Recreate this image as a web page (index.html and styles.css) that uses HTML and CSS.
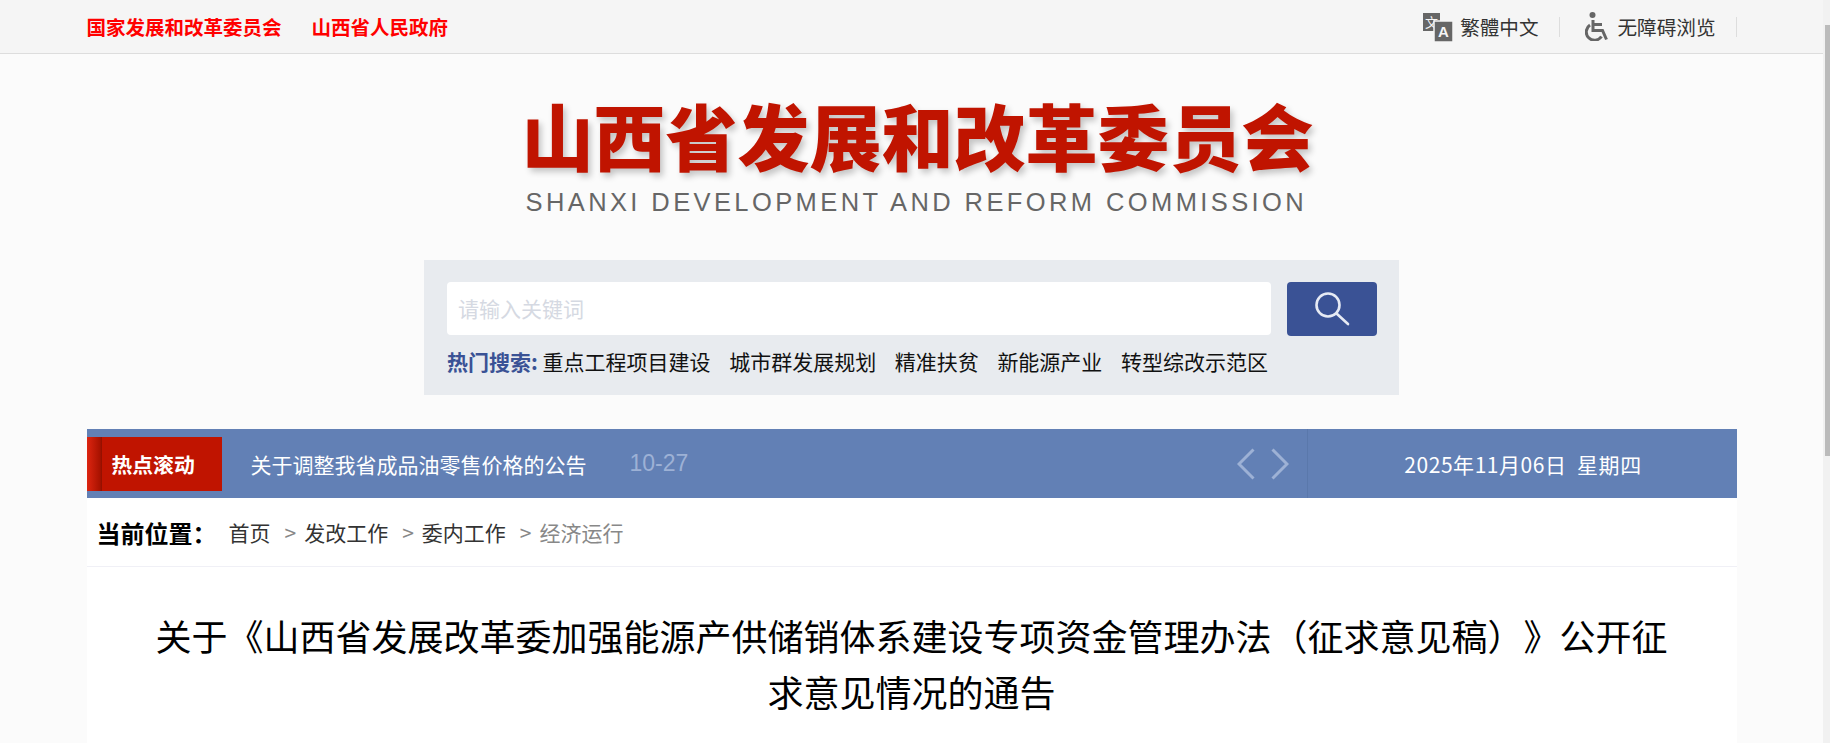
FILE: index.html
```html
<!DOCTYPE html>
<html lang="zh-CN">
<head>
    <meta charset="UTF-8">
    <meta name="viewport" content="width=device-width, initial-scale=1.0">
    <title>山西省发展和改革委员会</title>
    <link rel="stylesheet" href="styles.css">
</head>
<body>
    <div class="topbar">
        <div class="wrap topbar-inner">
            <div class="toplinks">
                <a href="#">国家发展和改革委员会</a>
                <a href="#">山西省人民政府</a>
            </div>
            <div class="tools">
                <a href="#" class="tool tool-lang">
                    <svg class="icon-lang" width="30" height="30" viewBox="0 0 30 30">
                        <rect x="0" y="1" width="17" height="18" fill="#666"/>
                        <text x="8.5" y="14.5" class="icon-lang-a" font-size="13" text-anchor="middle">文</text>
                        <rect x="11" y="9" width="19" height="21" fill="#666" stroke="#f5f5f5" stroke-width="1.5"/>
                        <text x="20.5" y="25" class="icon-lang-a" font-size="15" font-weight="700" text-anchor="middle">A</text>
                    </svg>
                    繁體中文
                </a>
                <a href="#" class="tool tool-access">
                    <svg width="26" height="29" viewBox="0 0 26 29" fill="none" stroke="#666" stroke-width="3">
                        <circle cx="7.5" cy="3" r="3" fill="#666" stroke="none"/>
                        <path d="M8 8V18.5H17.5L21.5 27.5"/>
                        <path d="M8 12.5H17"/>
                        <path d="M5 13A8.3 8.3 0 1 0 16.5 24.5"/>
                    </svg>
                    无障碍浏览
                </a>
            </div>
        </div>
    </div>

    <div class="logo">
        <div class="logo-cn">山西省发展和改革委员会</div>
        <div class="logo-en">SHANXI DEVELOPMENT AND REFORM COMMISSION</div>
    </div>

    <div class="searchbox">
        <div class="search-row">
            <input type="text" class="search-input" placeholder="请输入关键词">
            <button class="search-btn">
                <svg width="36" height="36" viewBox="0 0 36 36" fill="none" stroke="#e6eaf4" stroke-width="2.6" stroke-linecap="round">
                    <circle cx="14" cy="14" r="11.5"/>
                    <path d="M22.5 22.5L34 33"/>
                </svg>
            </button>
        </div>
        <div class="hot">
            <span class="hot-title">热门搜索:</span>
            <a href="#">重点工程项目建设</a>
            <a href="#">城市群发展规划</a>
            <a href="#">精准扶贫</a>
            <a href="#">新能源产业</a>
            <a href="#">转型综改示范区</a>
        </div>
    </div>

    <div class="wrap ticker">
        <div class="ticker-label">热点滚动</div>
        <a href="#" class="ticker-text">关于调整我省成品油零售价格的公告</a>
        <span class="ticker-date">10-27</span>
        <div class="ticker-arrows">
            <svg width="18" height="32" viewBox="0 0 18 32" fill="none" stroke="#9db1d5" stroke-width="3"><path d="M16.5 1.5L2 16L16.5 30.5"/></svg>
            <svg width="18" height="32" viewBox="0 0 18 32" fill="none" stroke="#9db1d5" stroke-width="3"><path d="M1.5 1.5L16 16L1.5 30.5"/></svg>
        </div>
        <div class="today">2025年11月06日&nbsp;&nbsp;星期四</div>
    </div>

    <div class="wrap main">
        <div class="crumbs">
            <span class="crumbs-title">当前位置：</span>
            <a href="#">首页</a>
            <span class="sep">&gt;</span>
            <a href="#">发改工作</a>
            <span class="sep">&gt;</span>
            <a href="#">委内工作</a>
            <span class="sep">&gt;</span>
            <a href="#" class="current">经济运行</a>
        </div>
        <div class="article">
            <h1>关于《山西省发展改革委加强能源产供储销体系建设专项资金管理办法（征求意见稿）》公开征求意见情况的通告</h1>
        </div>
    </div>

    <div class="scrollbar"><div class="scrollbar-thumb"></div></div>
</body>
</html>
```

FILE: styles.css
```css
html::-webkit-scrollbar {
    display: none;
}
body {
    font-family: "Noto Sans CJK SC", sans-serif;
    background-color: #fbfbfb;
    margin: 0;
    padding: 0 7px 0 0;
}
a {
    text-decoration: none;
    color: inherit;
}
.wrap {
    width: 1650px;
    margin: 0 auto;
}
.scrollbar {
    position: fixed;
    top: 0;
    right: 0;
    bottom: 0;
    width: 7px;
    background-color: #f1f1f1;
}
.scrollbar-thumb {
    position: absolute;
    top: 25px;
    left: 2px;
    right: 0;
    height: 431px;
    background-color: #bbb;
}
.topbar {
    height: 54px;
    box-sizing: border-box;
    background-color: #f5f5f5;
    border-bottom: 1px solid #ddd;
}
.topbar-inner {
    height: 53px;
    display: flex;
    justify-content: space-between;
    align-items: center;
}
.toplinks {
    display: flex;
    gap: 30px;
    color: #f00;
    font-size: 19.5px;
    font-weight: 700;
}
.tools {
    display: flex;
    color: #333;
    font-size: 19.6px;
}
.tool {
    display: flex;
    align-items: center;
    height: 20px;
    gap: 7px;
    padding-right: 20px;
    border-right: 1px solid #ddd;
}
.tool-lang {
    margin-right: 25px;
}
.icon-lang-a {
    fill: #f5f5f5;
    font-family: "Liberation Sans", "Noto Sans CJK SC", sans-serif;
}
.logo {
    width: 790px;
    margin: 43px auto 0;
    padding-left: 14px;
}
.logo-cn {
    margin-left: -2px;
    font-size: 72px;
    line-height: 74px;
    font-weight: 900;
    white-space: nowrap;
    color: #c01400;
    text-shadow: 3px 4px 6px rgba(0, 0, 0, 0.22);
}
.logo-en {
    margin: 18px 0 0 2px;
    font-family: "Liberation Sans", sans-serif;
    font-size: 25.5px;
    line-height: 26px;
    letter-spacing: 3.4px;
    white-space: nowrap;
    color: #666;
}
.searchbox {
    width: 975px;
    height: 135px;
    box-sizing: border-box;
    margin: 45px auto 0;
    padding: 22px 22px 0 23px;
    background-color: #e8ebef;
}
.search-row {
    display: flex;
    align-items: flex-start;
    gap: 16px;
}
.search-input {
    width: 824px;
    height: 53px;
    box-sizing: border-box;
    padding: 0 12px 2px 11px;
    border: none;
    border-radius: 4px;
    background-color: #fff;
    font-family: inherit;
    font-size: 21px;
}
.search-input::placeholder {
    color: #d5d9e2;
}
.search-btn {
    width: 90px;
    height: 54px;
    padding: 0;
    border: none;
    border-radius: 4px;
    background-color: #3a5295;
    display: flex;
    justify-content: center;
    align-items: center;
}
.hot {
    display: flex;
    gap: 18.6px;
    margin-top: 9px;
    font-size: 21px;
    line-height: 32px;
    color: #111;
}
.hot-title {
    margin-right: -20px;
    width: 97px;
    font-weight: 700;
    color: #3a5295;
}
.ticker {
    height: 69px;
    margin-top: 34px;
    display: flex;
    align-items: center;
    background-color: #6280b5;
    color: #fff;
    font-size: 21px;
}
.ticker-label {
    width: 135px;
    height: 54px;
    box-sizing: border-box;
    padding-left: 25px;
    line-height: 54px;
    font-weight: 700;
    font-size: 20.8px;
    background: linear-gradient(90deg, #dd2510 0, #a81200 13px, #8f1000 15px, #c01400 15px);
}
.ticker-text {
    margin-left: 29px;
}
.ticker-date {
    margin-left: 43px;
    color: #9db1d5;
    font-family: "Liberation Sans", sans-serif;
    font-size: 23px;
}
.ticker-arrows {
    margin-left: auto;
    margin-right: 18px;
    display: flex;
    gap: 16px;
}
.today {
    width: 430px;
    box-sizing: border-box;
    padding-left: 2px;
    align-self: stretch;
    display: flex;
    justify-content: center;
    align-items: center;
    letter-spacing: 0.55px;
    border-left: 1px solid #5a78ab;
}
.main {
    background-color: #fff;
}
.crumbs {
    height: 68px;
    padding-left: 10px;
    display: flex;
    align-items: center;
    border-bottom: 1px solid #f0f0f6;
    font-size: 21px;
    color: #333;
}
.crumbs-title {
    width: 132px;
    font-size: 24px;
    font-weight: 700;
    color: #000;
}
.sep {
    margin: 0 8px 0 14px;
    color: #888;
}
.current {
    color: #888;
}
.article {
    min-height: 586px;
    padding: 40px 65px 0;
}
.article h1 {
    margin: 0;
    font-size: 36px;
    line-height: 56px;
    font-weight: 400;
    text-align: center;
    text-spacing-trim: space-all;
    color: #000;
}
```
